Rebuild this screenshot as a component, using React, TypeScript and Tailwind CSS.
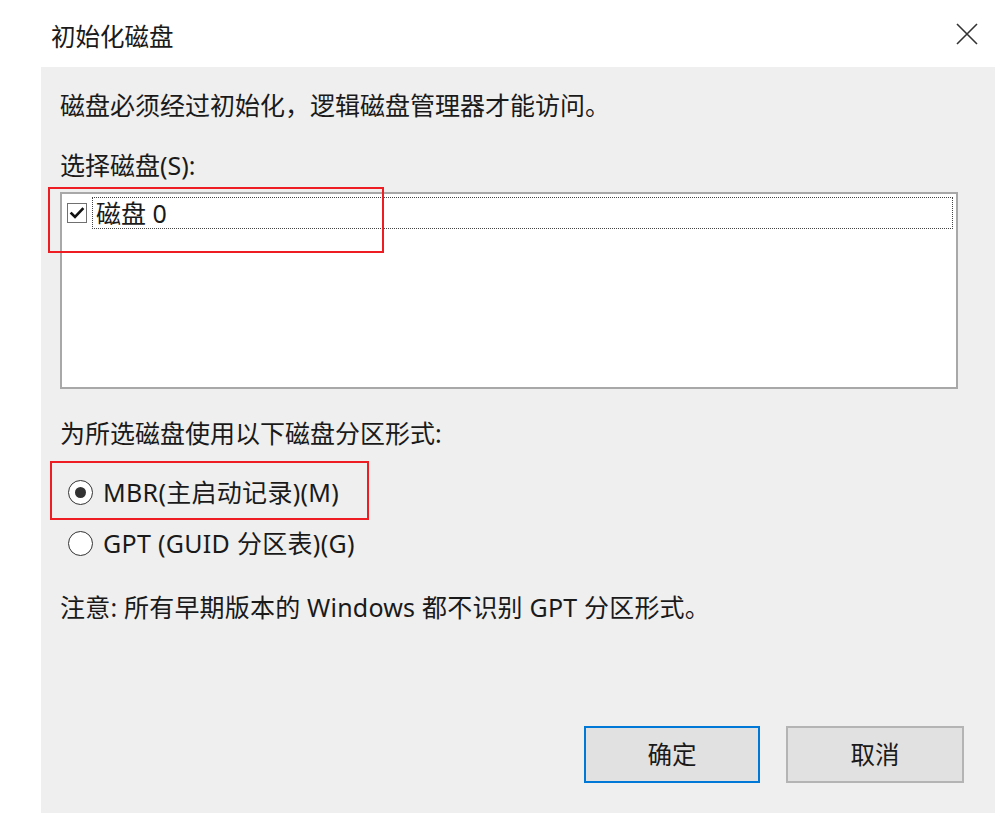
import React from "react";

const font = { fontFamily: '"Noto Sans", "Noto Sans CJK SC", sans-serif' };

function CheckBox() {
  return (
    <div className="w-[20px] h-[20px] border border-[#707070] bg-white flex items-center justify-center shrink-0">
      <svg width="16" height="16" viewBox="0 0 16 16">
        <path d="M2.5 8.5 L6 12 L13.5 4" fill="none" stroke="#111" strokeWidth="2.6" strokeLinecap="square" />
      </svg>
    </div>
  );
}

function Radio({ checked }: { checked: boolean }) {
  return (
    <div className="w-[25px] h-[25px] rounded-full border-[1.5px] border-[#333] bg-white flex items-center justify-center shrink-0">
      {checked && <div className="w-[11px] h-[11px] rounded-full bg-[#333]" />}
    </div>
  );
}

export default function App() {
  return (
    <div className="w-[999px] h-[813px] bg-white flex flex-col text-[#1a1a1a] overflow-hidden" style={font}>
      <div className="h-[67px] flex items-start justify-between pl-[51px] pr-[21px] shrink-0">
        <div className="mt-[21px] text-[24.5px] leading-[32px]">初始化磁盘</div>
        <svg className="mt-[23px]" width="22" height="22" viewBox="0 0 22 22">
          <path d="M1 1 L21 21 M21 1 L1 21" stroke="#333" strokeWidth="1.6" />
        </svg>
      </div>
      <div className="relative ml-[41px] mr-[4px] flex-1 bg-[#efefef] pl-[19px] flex flex-col text-[25px] leading-[32px]">
        <div className="mt-[22px]">磁盘必须经过初始化，逻辑磁盘管理器才能访问。</div>
        <div className="mt-[28px]">选择磁盘(S):</div>
        <div className="mt-[11px] w-[898px] h-[197px] border-2 border-[#a8a8a8] bg-white pt-[3px] pl-[5px] pr-[3px]">
          <div className="flex items-center h-[32px]">
            <CheckBox />
            <div className="ml-[5px] flex-1 h-[32px] border border-dotted border-[#444] flex items-center pl-[3px] leading-[30px]">
              磁盘 0
            </div>
          </div>
        </div>
        <div className="mt-[28px]">为所选磁盘使用以下磁盘分区形式:</div>
        <div className="mt-[27px] flex items-center h-[32px] pl-[8px] gap-[10px]">
          <Radio checked={true} />
          <span className="tracking-[0.3px]">MBR(主启动记录)(M)</span>
        </div>
        <div className="mt-[19px] flex items-center h-[32px] pl-[8px] gap-[10px]">
          <Radio checked={false} />
          <span className="tracking-[0.3px]">GPT (GUID 分区表)(G)</span>
        </div>
        <div className="mt-[32px] tracking-[0.2px]">注意: 所有早期版本的 Windows 都不识别 GPT 分区形式。</div>
        <div className="mt-[103px] flex justify-end pr-[31px] gap-[26px]">
          <button className="w-[176px] h-[57px] border-2 border-[#0078d7] bg-[#e1e1e1] text-[24.5px] leading-[32px] flex items-center justify-center">确定</button>
          <button className="w-[178px] h-[57px] border-2 border-[#b4b4b4] bg-[#e1e1e1] text-[24.5px] leading-[32px] flex items-center justify-center">取消</button>
        </div>
        <div className="absolute left-[7px] top-[120px] w-[336px] h-[66px] border-2 border-[#ee1d23]" />
        <div className="absolute left-[9px] top-[394px] w-[319px] h-[59px] border-2 border-[#ee1d23]" />
      </div>
    </div>
  );
}
